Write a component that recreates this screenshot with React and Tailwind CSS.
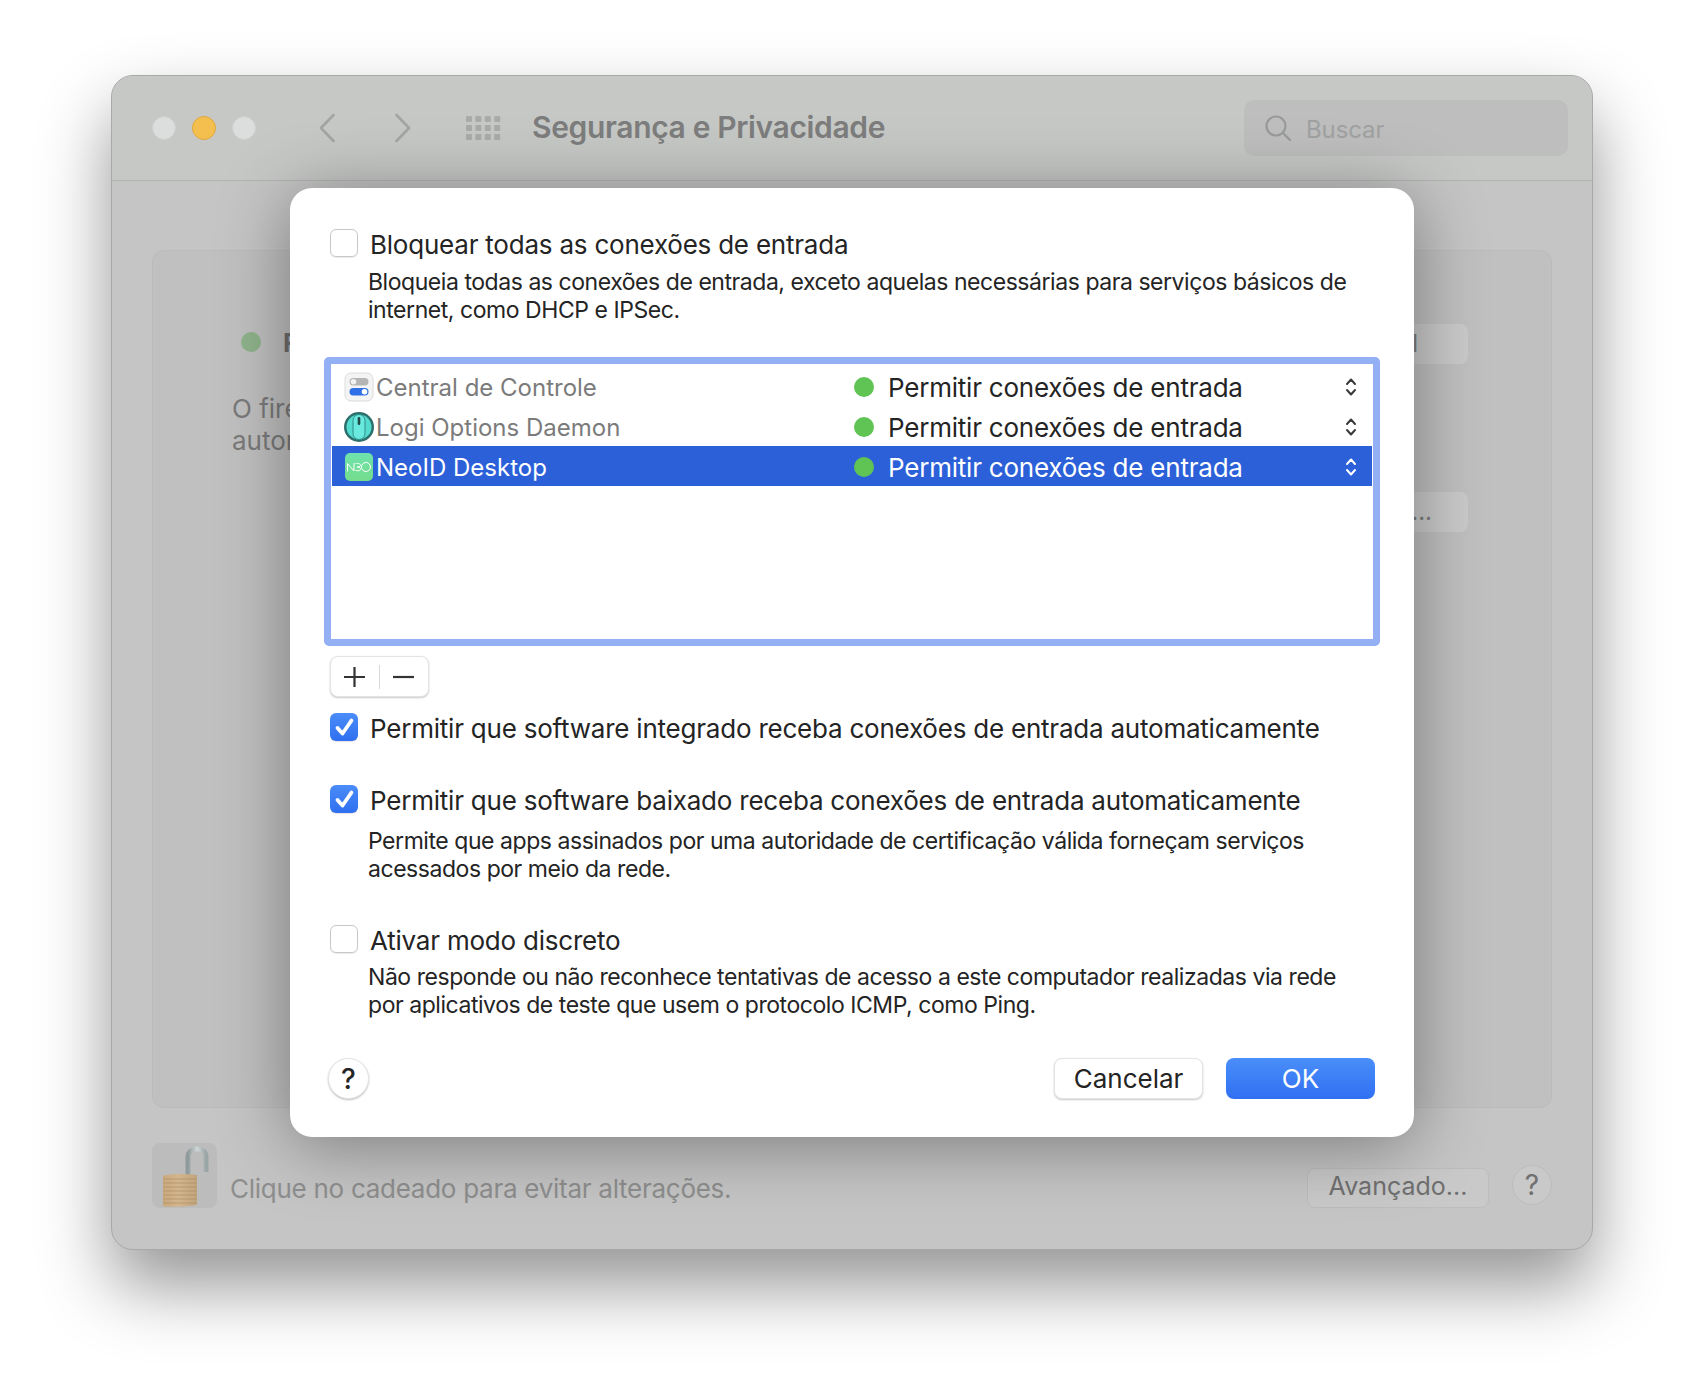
const sans = "font-['Inter','Liberation_Sans',sans-serif]";

function Check({ on }) {
  if (on)
    return (
      <div className="w-[28px] h-[28px] shrink-0 rounded-[6px] bg-gradient-to-b from-[#4a8cf8] to-[#2f6ff0] flex items-center justify-center shadow-[0_1px_1px_rgba(0,0,0,0.1)]">
        <svg width="21" height="21" viewBox="0 0 21 21" fill="none">
          <path d="M3.5 11L8.5 16.5L17.5 3.5" stroke="white" strokeWidth="3.8" strokeLinecap="round" strokeLinejoin="round" />
        </svg>
      </div>
    );
  return <div className="w-[28px] h-[28px] shrink-0 rounded-[6px] bg-white border border-[#c8c8c8] shadow-[0_1px_1px_rgba(0,0,0,0.08)]" />;
}

function Option({ on, children, className }) {
  return (
    <div className={"flex items-center gap-[12px] h-[28px] text-[26px] leading-[28px] text-[#242424] tracking-[-0.22px] " + (className || "")}>
      <Check on={on} />
      <span className="whitespace-nowrap pt-[3px]">{children}</span>
    </div>
  );
}

function Desc({ children, className }) {
  return <p className={"ml-[38px] text-[23px] leading-[28px] tracking-[-0.45px] text-[#242424] whitespace-nowrap " + (className || "")}>{children}</p>;
}

function Stepper({ color }) {
  return (
    <svg width="12" height="20" viewBox="0 0 12 20" fill="none" stroke={color} strokeWidth="2" strokeLinecap="round" strokeLinejoin="round">
      <path d="M2 7L6 2.5L10 7" />
      <path d="M2 13L6 17.5L10 13" />
    </svg>
  );
}

function ControlIcon() {
  return (
    <svg width="30" height="30" viewBox="0 0 30 30" className="shrink-0">
      <rect x="1" y="1" width="28" height="28" rx="6" fill="#f4f4f4" stroke="#dcdcdc" />
      <rect x="5.5" y="6" width="19" height="7.5" rx="3.75" fill="#b5b5b5" />
      <circle cx="9.5" cy="9.75" r="2.8" fill="#f2f2f2" />
      <rect x="5.5" y="16" width="19" height="7.5" rx="3.75" fill="#2f6fe8" />
      <circle cx="20.5" cy="19.75" r="2.8" fill="#ffffff" />
    </svg>
  );
}

function LogiIcon() {
  return (
    <svg width="32" height="32" viewBox="0 0 32 32" className="shrink-0 -ml-[1px] -mr-[1px]">
      <circle cx="16" cy="16" r="15" fill="#2c6f6c" />
      <circle cx="16" cy="16" r="12.5" fill="#55dcd0" />
      <rect x="10" y="3.5" width="12" height="25" rx="6" fill="#6aeadf" stroke="#2f8d88" strokeWidth="1" />
      <rect x="14.7" y="6" width="2.6" height="8" rx="1.3" fill="#1f4a48" />
    </svg>
  );
}

function NeoIcon() {
  return (
    <svg width="30" height="30" viewBox="0 0 30 30" className="shrink-0">
      <defs>
        <linearGradient id="neo" x1="0" y1="0" x2="0" y2="1">
          <stop offset="0" stopColor="#6fe3ad" />
          <stop offset="1" stopColor="#74dc8c" />
        </linearGradient>
      </defs>
      <rect x="1" y="1" width="28" height="28" rx="5" fill="url(#neo)" />
      <g stroke="white" strokeWidth="1" fill="none" strokeLinecap="round" strokeLinejoin="round">
        <path d="M3.5 19V11.5L10 19V11.5" />
        <path d="M12 11.5C14 11 17 12 16.5 13.5C16 15 13.5 15 13 15C14 15 17 15.5 16.5 17.5C16 19 14 19 12 18.5" />
        <circle cx="22" cy="15" r="4.5" />
      </g>
    </svg>
  );
}

function Row({ icon, name, nameClass, rowClass, statusClass, stepper }) {
  return (
    <div className={"grid grid-cols-[522px_1fr_27px] items-center h-[40px] " + (rowClass || "")}>
      <div className={"flex items-center gap-[2px] pl-[12px] text-[24px] " + nameClass}>
        {icon}
        <span className="whitespace-nowrap pt-[3px]">{name}</span>
      </div>
      <div className={"flex items-center gap-[14px] text-[26px] tracking-[-0.22px] " + statusClass}>
        <div className="w-[20px] h-[20px] rounded-full bg-[#5fc453]" />
        <span className="whitespace-nowrap pt-[2px]">Permitir conexões de entrada</span>
      </div>
      <div className="flex items-center">
        <Stepper color={stepper} />
      </div>
    </div>
  );
}

function Lock() {
  return (
    <svg width="65" height="65" viewBox="0 0 65 65">
      <defs>
        <linearGradient id="shackle" x1="0" y1="0" x2="1" y2="0">
          <stop offset="0" stopColor="#8e9a9b" />
          <stop offset="0.5" stopColor="#d0d6d6" />
          <stop offset="1" stopColor="#9aa5a6" />
        </linearGradient>
        <linearGradient id="body" x1="0" y1="0" x2="1" y2="0">
          <stop offset="0" stopColor="#c9a87c" />
          <stop offset="0.45" stopColor="#d4b68e" />
          <stop offset="1" stopColor="#c2a47c" />
        </linearGradient>
      </defs>
      <path d="M36 33V14C36 9 40 6 45 6C50 6 54 9 54 14V29" fill="none" stroke="url(#shackle)" strokeWidth="5" />
      <path d="M11 32.5Q28 30 45 32V60Q45 62 42 62.5Q26 64.5 12 63.5Q11 63 11 61Z" fill="url(#body)" />
      <g stroke="#a88a63" strokeWidth="1" opacity="0.6">
        <path d="M11 36H45M11 40H45M11 44H45M11 48H45M11 52H45M11 56H45M11 60H45" />
      </g>
    </svg>
  );
}

export default function App() {
  return (
    <div className={"w-[1704px] h-[1398px] bg-white pl-[111px] pt-[75px] overflow-hidden " + sans}>
      <div className="relative w-[1482px] h-[1175px] rounded-[22px] bg-[#c4c5c4] border border-[#a9a9a9] shadow-[0_36px_70px_rgba(0,0,0,0.42)] flex flex-col">
        {/* Title bar */}
        <div className="h-[105px] shrink-0 border-b border-[#b2b3b2] bg-[#c6c8c6] rounded-t-[21px] flex items-center pl-[40px] pr-[24px]">
          <div className="flex items-center gap-[16px]">
            <div className="w-[24px] h-[24px] rounded-full bg-[#dcdedd] border border-[#cdcfce]" />
            <div className="w-[24px] h-[24px] rounded-full bg-[#f5bf4f] border border-[#e0a83e]" />
            <div className="w-[24px] h-[24px] rounded-full bg-[#dcdedd] border border-[#cdcfce]" />
          </div>
          <svg width="18" height="30" viewBox="0 0 18 30" fill="none" stroke="#a3a5a4" strokeWidth="2.6" strokeLinecap="round" strokeLinejoin="round" className="ml-[62px]">
            <path d="M15.5 2L3 15L15.5 28" />
          </svg>
          <svg width="18" height="30" viewBox="0 0 18 30" fill="none" stroke="#a3a5a4" strokeWidth="2.6" strokeLinecap="round" strokeLinejoin="round" className="ml-[58px]">
            <path d="M2.5 2L15 15L2.5 28" />
          </svg>
          <svg width="37" height="26" viewBox="0 0 37 26" fill="#a9abaa" className="ml-[53px]">
            {[0, 1, 2, 3].map((c) =>
              [0, 1, 2].map((r) => <rect key={c + "-" + r} x={1 + c * 9.4} y={1 + r * 9} width="6" height="6" rx="1" />)
            )}
          </svg>
          <div className="ml-[30px] mb-[2px] text-[30px] font-semibold text-[#7c7d7c] tracking-[-0.35px] whitespace-nowrap">Segurança e Privacidade</div>
          <div className="ml-auto w-[324px] h-[56px] rounded-[10px] bg-[#bdbebd] flex items-center pl-[20px] gap-[14px] mb-[0px]">
            <svg width="28" height="28" viewBox="0 0 28 28" fill="none" stroke="#989a99" strokeWidth="2.2" strokeLinecap="round">
              <circle cx="12" cy="12" r="9.5" />
              <path d="M19 19L26 26" />
            </svg>
            <span className="text-[24px] tracking-[-0.1px] text-[#a0a2a1] pt-[3px]">Buscar</span>
          </div>
        </div>

        {/* Panel behind the sheet */}
        <div className="mx-[40px] mt-[69px] h-[858px] shrink-0 rounded-[12px] bg-[#c0c0c0] border border-[#bbbbbb] pl-[88px] pr-[83px] pt-[73px] overflow-hidden">
          <div className="flex items-center justify-between h-[40px]">
            <div className="flex items-center gap-[22px] text-[26px] font-bold text-[#6f6f6f] whitespace-nowrap -mt-[4px]">
              <div className="w-[20px] h-[20px] rounded-full bg-[#8fb48c]" />
              <span>Firewall: Ativado</span>
            </div>
            <div className="h-[40px] w-[300px] rounded-[8px] bg-[#cacaca] flex items-center justify-end pr-[50px] text-[24px] text-[#7c7c7c] whitespace-nowrap">Desativar Firewall</div>
          </div>
          <p className="-ml-[9px] mt-[29px] text-[26px] leading-[32px] text-[#7a7a7a] whitespace-nowrap">
            O firewall
            <br />
            automático
          </p>
          <div className="mt-[35px] flex justify-end">
            <div className="h-[40px] w-[300px] rounded-[8px] bg-[#cacaca] flex items-center justify-end pr-[36px] text-[24px] text-[#7c7c7c] whitespace-nowrap">Opções de Firewall...</div>
          </div>
        </div>

        {/* Footer */}
        <div className="mx-[40px] mt-[35px] flex items-center justify-between">
          <div className="flex items-center gap-[13px]">
            <div className="w-[65px] h-[65px] rounded-[8px] bg-[#bcbcbc]">
              <Lock />
            </div>
            <span className="text-[26px] text-[#8e8e8e] tracking-[-0.27px] mt-[25px] whitespace-nowrap">Clique no cadeado para evitar alterações.</span>
          </div>
          <div className="flex items-center gap-[23px] mt-[24px]">
            <div className="w-[182px] h-[40px] rounded-[8px] bg-[#c9c9c9] border border-[#bdbdbd] flex items-center justify-center text-[25px] text-[#707070] pb-[2px]">Avançado...</div>
            <div className="w-[40px] h-[40px] rounded-full bg-[#c9c9c9] border border-[#bdbdbd] flex items-center justify-center text-[28px] text-[#707070] -mt-[6px]">?</div>
          </div>
        </div>

        {/* Sheet */}
        <div className="absolute left-[178px] top-[112px] w-[1124px] h-[949px] rounded-[22px] bg-white shadow-[0_8px_70px_rgba(0,0,0,0.38)] pl-[40px] pt-[41px]">
          <Option>Bloquear todas as conexões de entrada</Option>
          <Desc className="mt-[11px]">
            Bloqueia todas as conexões de entrada, exceto aquelas necessárias para serviços básicos de
            <br />
            internet, como DHCP e IPSec.
          </Desc>

          <div className="-ml-[6px] mt-[33px] w-[1056px] h-[289px] rounded-[5px] border-[7px] border-[#94b0f4] bg-white pt-[2px] px-[1px]">
            <Row icon={<ControlIcon />} name="Central de Controle" nameClass="text-[#7b7b7b]" statusClass="text-[#242424]" stepper="#3a3a3a" />
            <Row icon={<LogiIcon />} name="Logi Options Daemon" nameClass="text-[#7b7b7b]" statusClass="text-[#242424]" stepper="#3a3a3a" />
            <Row icon={<NeoIcon />} name="NeoID Desktop" rowClass="bg-[#2b60d9]" nameClass="text-white" statusClass="text-white" stepper="#ffffff" />
          </div>

          <div className="mt-[10px] w-[99px] h-[41px] rounded-[8px] bg-white border border-[#e4e4e4] shadow-[0_1px_2px_rgba(0,0,0,0.22)] flex items-center">
            <svg width="48" height="24" viewBox="0 0 48 24" fill="none" stroke="#333333" strokeWidth="2.2">
              <path d="M13 12H34M23.5 2V22" />
            </svg>
            <div className="w-[1px] h-[24px] bg-[#d8d8d8]" />
            <svg width="48" height="24" viewBox="0 0 48 24" fill="none" stroke="#333333" strokeWidth="2.2">
              <path d="M13 12H34" />
            </svg>
          </div>

          <Option on className="mt-[16px]">Permitir que software integrado receba conexões de entrada automaticamente</Option>
          <Option on className="mt-[44px]">Permitir que software baixado receba conexões de entrada automaticamente</Option>
          <Desc className="mt-[14px]">
            Permite que apps assinados por uma autoridade de certificação válida forneçam serviços
            <br />
            acessados por meio da rede.
          </Desc>
          <Option className="mt-[42px]">Ativar modo discreto</Option>
          <Desc className="mt-[10px]">
            Não responde ou não reconhece tentativas de acesso a este computador realizadas via rede
            <br />
            por aplicativos de teste que usem o protocolo ICMP, como Ping.
          </Desc>

          <div className="mt-[39px] -ml-[2px] w-[1047px] flex items-center">
            <div className="w-[41px] h-[41px] rounded-full bg-white border border-[#e4e4e4] shadow-[0_1px_2px_rgba(0,0,0,0.25)] flex items-center justify-center text-[28px] text-[#242424] font-medium">?</div>
            <div className="ml-auto w-[149px] h-[41px] rounded-[8px] bg-white border border-[#e4e4e4] shadow-[0_1px_2px_rgba(0,0,0,0.22)] flex items-center justify-center text-[26px] text-[#242424]">Cancelar</div>
            <div className="ml-[23px] w-[149px] h-[41px] rounded-[8px] bg-gradient-to-b from-[#4a8ef9] to-[#316ff2] flex items-center justify-center text-[26px] text-white">OK</div>
          </div>
        </div>
      </div>
    </div>
  );
}
